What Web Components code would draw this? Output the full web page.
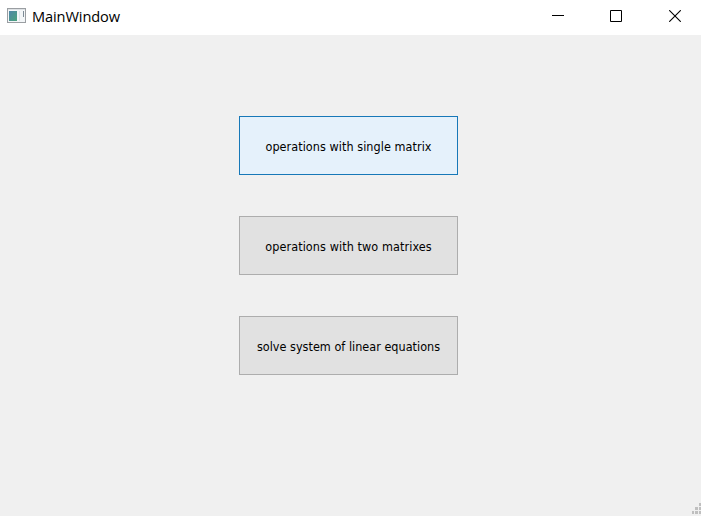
<!DOCTYPE html>
<html lang="en"><head><meta charset="utf-8"><title>MainWindow</title>
<style>html,body{margin:0;height:100%;overflow:hidden}</style></head>
<body>
<main-window>
<title-bar slot="title">MainWindow</title-bar>
<push-button active style="--spacing:.06px">operations with single matrix</push-button>
<push-button style="--spacing:.09px">operations with two matrixes</push-button>
<push-button style="--spacing:.02px">solve system of linear equations</push-button>
</main-window>
<script>
function define(name, markup) {
  customElements.define(name, class extends HTMLElement {
    constructor() {
      super();
      this.attachShadow({mode: 'open'}).innerHTML = markup;
    }
  });
}
define('app-icon', `<style>:host{display:block;width:19px;height:15px}svg{display:block}</style>
<svg width="19" height="15"><defs><linearGradient id="g" x2="1" y2="1"><stop stop-color="#4f86a8"/><stop offset="1" stop-color="#4aa37c"/></linearGradient></defs>
<rect x=".5" y=".5" width="18" height="14" fill="#f3f6f8" stroke="#9a9ea2"/>
<rect x="1" y="1" width="17" height="1" fill="#dde1e4"/>
<rect x="2" y="3" width="8" height="10" fill="url(#g)"/>
<path d="M12.5 3v10" stroke="#dfe6ea"/><path d="M16.5 3v6" stroke="#7d8b96"/></svg>`);
define('window-controls', `<style>:host{display:flex;align-items:flex-start;gap:46px;padding:10px 20px 0 0}svg{display:block}.close{margin-left:1px}</style>
<svg width="12" height="12"><path d="M0 5.5h12" stroke="#000"/></svg>
<svg width="12" height="12"><path d="M.5.5h11v11H.5z" fill="none" stroke="#000"/></svg>
<svg class="close" width="12" height="12"><path d="M.2.2l11.6 11.6M11.8.2L.2 11.8" stroke="#000" stroke-width="1.1"/></svg>`);
define('title-bar', `<style>:host{display:flex;align-items:flex-start;justify-content:space-between;height:35px;background:#fff;color:#000;font:14.6px/20px "Open Sans","Noto Sans",sans-serif}
.name{display:flex;gap:6px;padding:6px 0 0 7px}app-icon{margin-top:2px}.text{letter-spacing:-.1px;white-space:nowrap}</style>
<div class="name"><app-icon></app-icon><span class="text"><slot></slot></span></div><window-controls></window-controls>`);
define('push-button', `<style>:host{display:block;width:219px;height:59px}
button{display:flex;align-items:center;justify-content:center;width:100%;height:100%;box-sizing:border-box;margin:0;padding:2px 0 0;border:1px solid #adadad;border-radius:0;background:#e1e1e1;color:#000;font:12.5px/16px "DejaVu Sans Condensed","DejaVu Sans",sans-serif;font-stretch:condensed;white-space:nowrap;letter-spacing:var(--spacing,0)}
:host([active]) button{background:#e5f1fb;border-color:#1778b8}</style><button><span><slot></slot></span></button>`);
define('size-grip', `<style>:host{display:block;width:9px;height:12px}svg{display:block}</style>
<svg width="9" height="12" fill="#bfbfbf"><path d="M7 0h2v3H7zM3 4h3v3H3zM7 4h2v3H7zM0 8h2v3H0zM3 8h3v3H3zM7 8h2v3H7z"/></svg>`);
define('main-window', `<style>:host{display:flex;flex-direction:column;height:100vh;background:#f0f0f0}
main{flex:1;display:flex;flex-direction:column;gap:41px;padding:81px 0 0 239px}
footer{display:flex;justify-content:flex-end;padding-bottom:1px}</style>
<slot name="title"></slot><main><slot></slot></main><footer><size-grip></size-grip></footer>`);
</script>
</body></html></script>
